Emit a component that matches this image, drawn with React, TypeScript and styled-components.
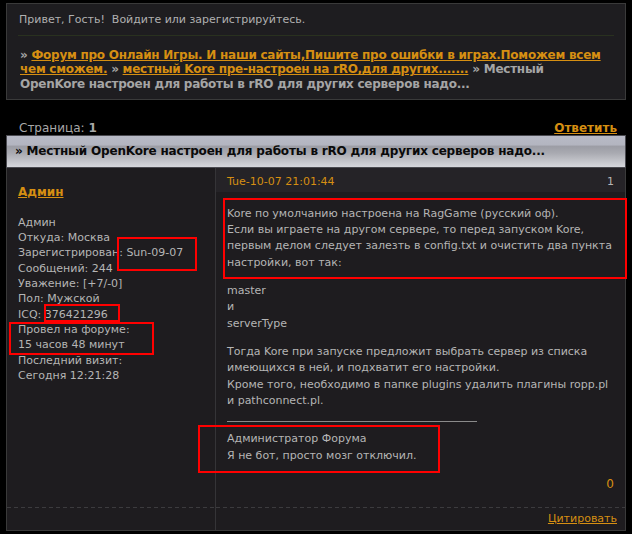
import React from 'react';
import styled, { createGlobalStyle } from 'styled-components';

const GlobalStyle = createGlobalStyle`
	html, body {
		margin: 0;
		padding: 0;
		background: #000;
	}
	body {
		font-family: "DejaVu Sans", Verdana, sans-serif;
		font-size: 11px;
		color: #b5b5b5;
	}
`;

type Mark = { x: number; y: number; w: number; h: number };

const marks: Mark[] = [
	{ x: 117, y: 237, w: 80, h: 34 },
	{ x: 44, y: 304, w: 76, h: 18 },
	{ x: 9, y: 322, w: 145, h: 33 },
	{ x: 223, y: 198, w: 404, h: 81 },
	{ x: 198, y: 425, w: 242, h: 48 },
];

const profile = [
	'Админ',
	'Откуда: Москва',
	'Зарегистрирован: Sun-09-07',
	'Сообщений: 244',
	'Уважение: [+7/-0]',
	'Пол: Мужской',
	'ICQ: 376421296',
	'Провел на форуме:',
	'15 часов 48 минут',
	'Последний визит:',
	'Сегодня 12:21:28',
];

function App() {
	return (
		<Page>
			<GlobalStyle />
			<TopPanel>
				<Greeting>Привет, Гость!&nbsp; Войдите или зарегистрируйтесь.</Greeting>
				<Crumbs>
					» <Link href="#">Форум про Онлайн Игры. И наши сайты,Пишите про ошибки в играх.Поможем всем чем сможем.</Link>{' '}
					» <Link href="#">местный Kore пре-настроен на rRO,для других.......</Link>{' '}
					» Местный OpenKore настроен для работы в rRO для других серверов надо...
				</Crumbs>
			</TopPanel>

			<PageRow>
				<span>
					Страница: <b>1</b>
				</span>
				<Link href="#" $bold>
					Ответить
				</Link>
			</PageRow>

			<Topic>
				<TitleBar>» Местный OpenKore настроен для работы в rRO для других серверов надо...</TitleBar>
				<PostGrid>
					<AuthorCell>
						<AuthorName href="#">Админ</AuthorName>
						<ProfileList>
							{profile.map((line) => (
								<div key={line}>{line}</div>
							))}
						</ProfileList>
					</AuthorCell>
					<MessageCell>
						<DateRow>
							<PostDate>Tue-10-07 21:01:44</PostDate>
							<span>1</span>
						</DateRow>
						<Body>
							<Para>
								Kore по умолчанию настроена на RagGame (русский оф).
								<br />
								Если вы играете на другом сервере, то перед запуском Kore, первым делом следует залезть в config.txt
								и очистить два пункта настройки, вот так:
							</Para>
							<Para>
								master
								<br />и<br />
								serverType
							</Para>
							<Para>
								Тогда Kore при запуске предложит выбрать сервер из списка имеющихся в ней, и подхватит его настройки.
								<br />
								Кроме того, необходимо в папке plugins удалить плагины ropp.pl и pathconnect.pl.
							</Para>
							<Signature>
								Администратор Форума
								<br />Я не бот, просто мозг отключил.
							</Signature>
							<Rating>0</Rating>
						</Body>
					</MessageCell>
					<FooterCell $left />
					<FooterCell>
						<Link href="#">Цитировать</Link>
					</FooterCell>
				</PostGrid>
			</Topic>

			{marks.map((m, i) => (
				<RedMark key={i} style={{ left: m.x, top: m.y, width: m.w, height: m.h }} />
			))}
		</Page>
	);
}

const Page = styled.div`
	position: relative;
	width: 620px;
	height: 534px;
	padding: 3px 6px 0;
	overflow: hidden;
`;

const TopPanel = styled.div`
	background: #1e1d20;
	border: 1px solid #3a3a3a;
	padding: 9px 11px 8px 11px;
`;

const Greeting = styled.div`
	line-height: 14px;
	padding: 0 1px 8px;
	border-bottom: 1px solid #29311f;
	color: #b0b0b0;
`;

const Crumbs = styled.div`
	margin-top: 12px;
	padding: 0 2px;
	font-size: 12px;
	font-weight: bold;
	letter-spacing: -0.25px;
	line-height: 14.3px;
	color: #a5a5a5;
`;

const Link = styled.a<{ $bold?: boolean }>`
	color: #d68f12;
	text-decoration: underline;
	font-weight: ${(p) => (p.$bold ? 'bold' : 'inherit')};
	font-size: ${(p) => (p.$bold ? '12px' : 'inherit')};
`;

const PageRow = styled.div`
	display: flex;
	justify-content: space-between;
	align-items: center;
	height: 14px;
	margin: 21px 0 0;
	padding: 0 9px 0 13px;
	font-size: 12px;
	color: #a8a8a8;
`;

const Topic = styled.div`
	border: 1px solid #3a3a3a;
	border-top: none;
`;

const TitleBar = styled.div`
	height: 31px;
	border: 1px solid #4a4a50;
	margin: 0 -1px;
	padding: 0 8px;
	display: flex;
	align-items: center;
	background: linear-gradient(#b8bac6 0%, #b3b5c0 28%, #9c9da5 34%, #a9aab1 55%, #d6d7dc 100%);
	color: #0a0a0a;
	font-size: 12px;
	font-weight: bold;
	letter-spacing: -0.18px;
`;

const PostGrid = styled.div`
	display: grid;
	grid-template-columns: 209px 1fr;
	background: #1e1c1f;
`;

const AuthorCell = styled.div`
	border-right: 1px solid #353437;
	padding: 17px 11px 0 11px;
`;

const AuthorName = styled.a`
	display: block;
	font-size: 12px;
	font-weight: bold;
	line-height: 14px;
	color: #d68f12;
	text-decoration: underline;
`;

const ProfileList = styled.div`
	margin-top: 16px;
	line-height: 15.3px;
	color: #b5b5b5;
`;

const MessageCell = styled.div`
	display: flex;
	flex-direction: column;
`;

const DateRow = styled.div`
	display: flex;
	justify-content: space-between;
	align-items: center;
	height: 21px;
	padding: 3px 11px 0;
	background: #252327;
	color: #b5b5b5;
`;

const PostDate = styled.span`
	color: #d68f12;
`;

const Body = styled.div`
	padding: 14px 11px 15px;
	line-height: 16.3px;
	color: #b5b5b5;
`;

const Para = styled.p`
	margin: 0 0 12px;
`;

const Signature = styled.div`
	width: 250px;
	border-top: 1px solid #8a8a8a;
	margin-top: 12px;
	padding-top: 8px;
	line-height: 17.3px;
`;

const Rating = styled.div`
	margin-top: 11px;
	text-align: right;
	color: #d68f12;
	font-size: 12px;
`;

const FooterCell = styled.div<{ $left?: boolean }>`
	height: 23px;
	display: flex;
	align-items: center;
	justify-content: flex-end;
	padding: 0 8px;
	background-image: repeating-linear-gradient(to right, #3c3b3e 0 4px, transparent 4px 7px);
	background-size: 100% 1px;
	background-repeat: no-repeat;
	border-right: ${(p) => (p.$left ? '1px solid #353437' : 'none')};
`;

const RedMark = styled.div`
	position: absolute;
	box-sizing: border-box;
	border: 2px solid #f00;
	pointer-events: none;
`;

export default App;
